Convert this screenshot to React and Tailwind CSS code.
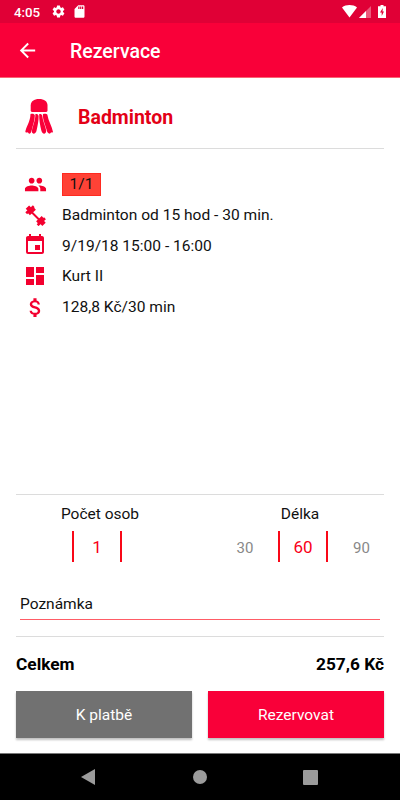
import React, { useState } from 'react';
import { MdArrowBack, MdSettings, MdSdCard, MdPeople, MdEvent, MdDashboard, MdAttachMoney } from 'react-icons/md';

const DumbbellIcon = () => (
  <svg className="w-[21px] h-[21px]" viewBox="0 0 21 21" fill="none" stroke="#f3002f">
    <path d="M5.500 6L15.500 16" strokeWidth="2" />
    <path d="M1.600 4.600L5 1.400M1.200 8.200L8.800 1.200M4 9.200L10 3.800" strokeWidth="2.600" />
    <path d="M12 17.200L17.600 12M12.600 20.200L20 13.200M16.400 20L19.800 16.800" strokeWidth="2.600" />
  </svg>
);

const ShuttlecockIcon = () => (
  <svg className="w-7 h-[35px]" viewBox="0 0 28 35" fill="#f90039">
    <path d="M5.700 11.500V6.500C5.700 2.300 9 0 14.100 0s8.400 2.300 8.400 6.500v5c0 .8-.5 1.400-1.300 1.400H7c-.8 0-1.300-.6-1.300-1.400z" />
    <path d="M5.500 15c1.900-.5 4.200-.2 4.300 1.400.2 4-1.900 9.600-3.100 14.800-.4 1.900-1.200 3.600-2.600 3.600-.7-.4-.9-.9-1.200-1.500-.9.500-1.900.2-2.600-.4C.8 28.400 5.300 23 5.500 15z" />
    <path d="M10.400 15c1.700-.2 3 .4 3.200 2 .2 4-1.100 10.400-2.100 14.700-.4 1.600-1.500 3-2.900 3-1.300-.5-1.900-1.400-1.700-2.700.7-5 3.700-10.800 3.500-17z" />
    <path d="M14.200 15c1.500-.2 2.900.3 3.100 1.900.3 5 3.400 10.400 3.900 14.800 0 1.500-.7 2.700-1.800 3-1.600-.1-2.700-1.300-3-2.900-1.100-5-2.500-11-2.200-16.800z" />
    <path d="M17.900 15.200c1-.5 3.700-.7 4.400.4 1 6.500 4.700 11.800 5.700 17.300-.4.700-1.200.8-1.900.4-.4 1-1.200 1.500-2.200 1.300-1.500-.8-1.900-2.200-2.300-3.800-1.300-5.300-3.900-9.700-3.700-15.600z" />
  </svg>
);

const details = [
  { icon: <MdPeople className="w-[23px] h-[23px]" />, text: '1/1', badge: true },
  { icon: <DumbbellIcon />, text: 'Badminton od 15 hod - 30 min.' },
  { icon: <MdEvent className="w-6 h-6 mb-[2px]" />, text: '9/19/18 15:00 - 16:00' },
  { icon: <MdDashboard className="w-6 h-6" />, text: 'Kurt II' },
  { icon: <MdAttachMoney className="w-[25px] h-[25px]" />, text: '128,8 Kč/30 min' },
];

function StatusBar() {
  return (
    <div className="h-[23px] bg-[#e00036] text-white flex items-center pl-[14px] pr-[14px]">
      <span className="text-[13.300px] font-medium leading-none mt-[2px] w-[37px]">4:05</span>
      <MdSettings className="w-[15px] h-[15px]" />
      <MdSdCard className="w-[15px] h-[15px] ml-[6px]" />
      <svg className="w-[15px] h-[13px] ml-auto" viewBox="0 0 15 13" fill="white">
        <path d="M0 2.500C4-.7 11-.7 15 2.500L7.500 12.600z" />
      </svg>
      <svg className="w-3 h-3 ml-[2px] mt-[1px]" viewBox="0 0 12 12" fill="white">
        <path d="M12 0V12H0z" opacity=".35" />
        <path d="M7 5V12H0z" />
      </svg>
      <svg className="w-2 h-[13px] ml-[7px]" viewBox="0 0 8 13">
        <path d="M2.500 0h3v1.200H8V13H0V1.200h2.500z" fill="white" />
        <path d="M4.800 3L2 7.500h1.700V11L6 6.500H4.500z" fill="#e00036" />
      </svg>
    </div>
  );
}

function Toolbar() {
  return (
    <div className="h-[55px] bg-[#f90039] border-b border-[#f96474] text-white flex items-center pl-[16px]">
      <MdArrowBack className="w-[23px] h-[23px]" />
      <h1 className="ml-[31px] text-[19.500px] font-medium leading-5 mt-[4px]">Rezervace</h1>
    </div>
  );
}

export default function App() {
  const [length, setLength] = useState(60);

  return (
    <div className="w-[400px] h-[800px] flex flex-col bg-white text-[#111111] font-['Roboto',sans-serif] overflow-hidden">
      <StatusBar />
      <Toolbar />

      <main className="flex-1 flex flex-col px-4">
        {/* Activity title */}
        <div className="h-[71px] flex items-center border-b border-[#dcdcdc] pl-[9px] pt-[7px]">
          <ShuttlecockIcon />
          <h2 className="ml-[25px] mt-[3px] text-[19.500px] font-bold leading-5 text-[#e30016]">Badminton</h2>
        </div>

        {/* Reservation details */}
        <div className="pt-[20px]">
          {details.map((row) => (
            <div key={row.text} className="h-[30.700px] flex items-center">
              <div className="w-[38px] mr-2 flex justify-center text-[#f3002f]">{row.icon}</div>
              {row.badge ? (
                <span className="w-[39px] h-[23px] pt-[1px] flex items-center justify-center bg-[#ff4236] border border-[#ff2a20] text-[15.500px]">{row.text}</span>
              ) : (
                <span className="text-[15.550px] leading-6">{row.text}</span>
              )}
            </div>
          ))}
        </div>

        {/* Persons and length pickers */}
        <div className="mt-auto h-[142px] border-t border-[#dcdcdc] flex flex-col">
          <div className="flex justify-between">
            <div className="w-[168px] pt-[8px]">
              <div className="text-center text-[15.500px] leading-[22px]">Počet osob</div>
              <div className="mt-[6px] ml-[56px] w-[50px] h-[31px] border-x-2 border-[#f90818] flex items-center justify-center pt-[2px] text-[17px] text-[#f90018]">1</div>
            </div>
            <div className="w-[168px] pt-[8px]">
              <div className="text-center text-[15.500px] leading-[22px]">Délka</div>
              <div className="mt-[6px] flex items-center">
                <button onClick={() => setLength(30)} className="w-[62px] shrink-0 text-[15px] text-[#888888] pr-[4px] pt-[3px]">30</button>
                <div className="w-[50px] h-[31px] shrink-0 border-x-2 border-[#f90818] flex items-center justify-center pt-[2px] text-[17px] text-[#f90018]">{length}</div>
                <button onClick={() => setLength(90)} className="w-[56px] shrink-0 pl-[11px] pt-[3px] text-[15px] text-[#888888]">90</button>
              </div>
            </div>
          </div>
          <div className="mt-[30px] mx-1 h-[27px] text-[15.500px] leading-[24px]">Poznámka</div>
          <div className="mx-1 h-px bg-[#ff5c66]" />
        </div>

        {/* Total price */}
        <div className="h-[55px] border-t border-[#dcdcdc] flex items-center justify-between text-[17.300px] font-bold text-black pt-[2px]">
          <span>Celkem</span>
          <span>257,6 Kč</span>
        </div>

        <div className="flex gap-4 mb-[15px]">
          <button className="flex-1 h-[47px] pt-[2px] bg-[#717171] text-white text-[15.500px] shadow-[0_2px_2px_rgba(0,0,0,0.25)]">K platbě</button>
          <button className="flex-1 h-[47px] pt-[2px] bg-[#f90039] text-white text-[15.500px] shadow-[0_2px_2px_rgba(0,0,0,0.25)]">Rezervovat</button>
        </div>
      </main>

      {/* System navigation */}
      <nav className="h-[47px] bg-black border-t border-[#777777] flex items-center">
        <svg className="w-[14px] h-4 ml-[81px]" viewBox="0 0 14 16" fill="#9b9b9b"><path d="M14 0V16L0 8z" /></svg>
        <div className="w-[14px] h-[14px] ml-[98px] rounded-full bg-[#9b9b9b]" />
        <div className="w-[15px] h-[15px] ml-[96px] rounded-[1px] bg-[#9b9b9b]" />
      </nav>
    </div>
  );
}
